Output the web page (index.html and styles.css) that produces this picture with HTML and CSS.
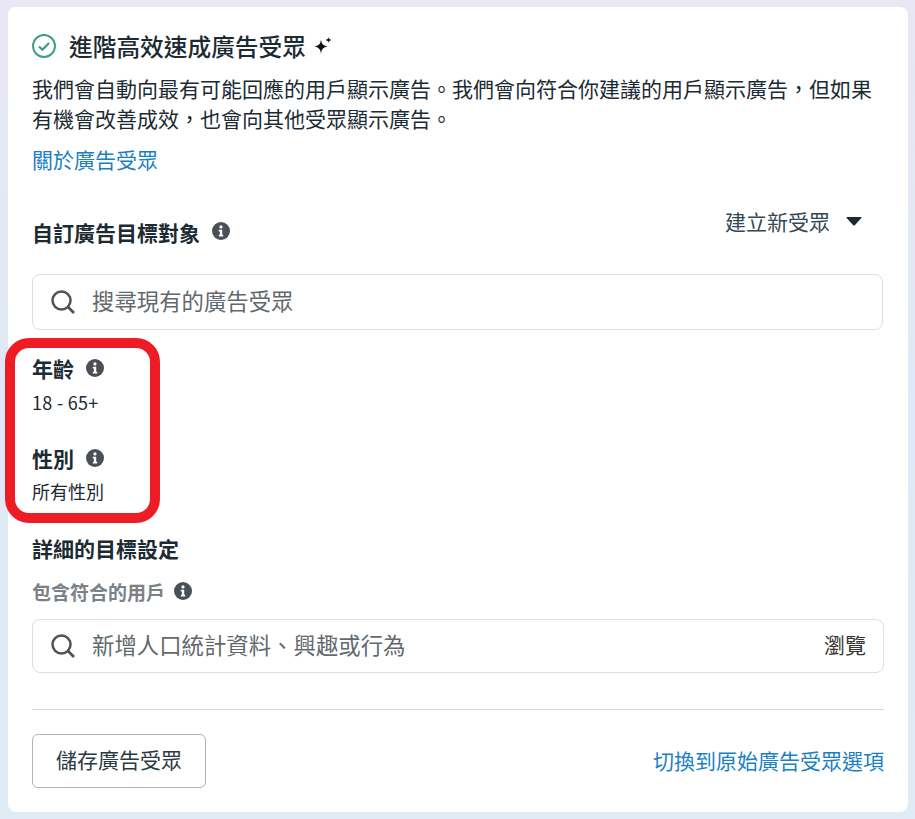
FILE: index.html
```html
<!DOCTYPE html>
<html lang="zh-Hant">
<head>
    <meta charset="UTF-8">
    <meta name="viewport" content="width=device-width, initial-scale=1.0">
    <title>廣告受眾</title>
    <link rel="stylesheet" href="styles.css">
</head>
<body>
    <div class="card">
        <div class="title-row">
            <svg class="check-icon" viewBox="0 0 24 24" width="24" height="24" aria-hidden="true">
                <circle cx="12" cy="12" r="11" fill="none" stroke="#3a9f7f" stroke-width="1.9"/>
                <path d="M7 12.500l3.400 3.300L17 9" fill="none" stroke="#3a9f7f" stroke-width="2.200"/>
            </svg>
            <h1 class="title">進階高效速成廣告受眾</h1>
            <svg class="spark-icon" viewBox="0 0 18 18" width="18" height="18" aria-hidden="true">
                <path d="M7 2.500C7.600 7 9 8.700 14 9.500 9 10.300 7.600 12 7 17 6.400 12 5 10.300 0 9.500 5 8.700 6.400 7 7 2.500z" fill="#111"/>
                <path d="M14.500 0c.3 1.800 1 2.500 3 3-2 .4-2.700 1.200-3 3-.3-1.800-1-2.600-3-3 2-.5 2.700-1.200 3-3z" fill="#111"/>
            </svg>
        </div>
        <p class="intro">我們會自動向最有可能回應的用戶顯示廣告。我們會向符合你建議的用戶顯示廣告，但如果有機會改善成效，也會向其他受眾顯示廣告。</p>
        <a class="link about-link" href="#">關於廣告受眾</a>

        <div class="custom-head">
            <div class="label custom-label">自訂廣告目標對象
                <svg class="info-icon" viewBox="0 0 18 18" aria-hidden="true"><use href="#info"/></svg>
            </div>
            <div class="create-new">建立新受眾
                <svg class="caret" viewBox="0 0 16 10" width="16" height="10" aria-hidden="true"><path d="M1 1h14a.6.6 0 0 1 .4 1L9 9a1.400 1.400 0 0 1-2 0L.6 2A.6.6 0 0 1 1 1z" fill="#1c2b33"/></svg>
            </div>
        </div>

        <div class="search-box search-audience">
            <svg class="search-icon" viewBox="0 0 24 24" width="24" height="24" aria-hidden="true"><use href="#search"/></svg>
            <span class="placeholder">搜尋現有的廣告受眾</span>
        </div>

        <div class="demographics">
            <div class="label">年齡
                <svg class="info-icon" viewBox="0 0 18 18" aria-hidden="true"><use href="#info"/></svg>
            </div>
            <div class="value age-value">18 - 65+</div>
            <div class="label gender-label">性別
                <svg class="info-icon" viewBox="0 0 18 18" aria-hidden="true"><use href="#info"/></svg>
            </div>
            <div class="value gender-value">所有性別</div>
            <div class="highlight"></div>
        </div>

        <div class="label detail-label">詳細的目標設定</div>
        <div class="include-label">包含符合的用戶
            <svg class="info-icon" viewBox="0 0 18 18" aria-hidden="true"><use href="#info"/></svg>
        </div>
        <div class="search-box search-detail">
            <svg class="search-icon" viewBox="0 0 24 24" width="24" height="24" aria-hidden="true"><use href="#search"/></svg>
            <span class="placeholder">新增人口統計資料、興趣或行為</span>
            <span class="browse">瀏覽</span>
        </div>

        <div class="footer">
            <button class="save-button">儲存廣告受眾</button>
            <a class="link switch-link" href="#">切換到原始廣告受眾選項</a>
        </div>
    </div>

    <!-- shared icons -->
    <svg class="icon-defs" aria-hidden="true">
        <symbol id="info" viewBox="0 0 18 18">
            <circle cx="9" cy="9" r="9" fill="#4b4f56"/>
            <circle cx="9" cy="4.900" r="1.600" fill="#fff"/>
            <path d="M6.800 7.700h3.400v5h1v1.700H6.900v-1.700h1v-3.300H6.800z" fill="#fff"/>
        </symbol>
        <symbol id="search" viewBox="0 0 24 24">
            <circle cx="10.500" cy="10.500" r="9" fill="none" stroke="#4f5459" stroke-width="2.500"/>
            <path d="M16.800 16.800L23 23" fill="none" stroke="#4f5459" stroke-width="2.800"/>
        </symbol>
    </svg>
</body>
</html>
```

FILE: styles.css
```css
body {
    margin: 0;
    height: 819px;
    padding: 7px 7px 7px 8px;
    box-sizing: border-box;
    overflow: hidden;
    background: linear-gradient(180deg, #e9e7f3 0%, #dfe9f7 50%, #dfebf6 100%);
    font-family: "Noto Sans CJK TC", "Noto Sans", sans-serif;
    color: #1c2b33;
}
.card {
    height: 805px;
    box-sizing: border-box;
    padding: 24px 24px 0;
    background-color: #fff;
    border-radius: 8px;
}
.title-row {
    display: flex;
    align-items: center;
    height: 30px;
}
.check-icon {
    margin-right: 13px;
}
.title {
    margin: 0;
    font-size: 23.700px;
    line-height: 30px;
    font-weight: 500;
}
.spark-icon {
    margin-left: 8px;
}
.intro {
    margin: 12px 0 0;
    font-size: 21px;
    line-height: 30px;
    color: #1c2b33;
}
.link {
    color: #1a7fc4;
    font-size: 21px;
    line-height: 30px;
    text-decoration: none;
}
.about-link {
    display: block;
    margin-top: 11px;
}
.switch-link {
    margin-bottom: 2px;
}
.custom-head {
    display: flex;
    justify-content: space-between;
    margin-top: 26px;
    height: 74px;
}
.label {
    font-size: 21px;
    line-height: 30px;
    font-weight: 700;
    display: flex;
    align-items: center;
}
.custom-label {
    margin-top: 17px;
    height: 30px;
}
.info-icon {
    width: 18px;
    height: 18px;
    margin-left: 12px;
    margin-bottom: 3px;
}
.demographics .info-icon {
    margin-bottom: 1px;
}
.create-new {
    display: flex;
    align-items: center;
    height: 30px;
    margin-top: 6px;
    margin-right: 22px;
    font-size: 21px;
    color: #344854;
}
.caret {
    margin-left: 16px;
}
.search-box {
    display: flex;
    align-items: center;
    box-sizing: border-box;
    border: 1px solid #dcdee3;
    border-radius: 8px;
    padding-left: 18px;
}
.search-audience {
    height: 56px;
    margin-right: 1px;
}
.search-detail {
    height: 54px;
    margin-top: 13px;
    padding-right: 17px;
}
.search-icon {
    margin-right: 17px;
}
.placeholder {
    margin-bottom: 4px;
    font-size: 22.400px;
    color: #62696e;
}
.browse {
    margin-left: auto;
    margin-bottom: 4px;
    font-size: 21px;
    color: #333;
}
.demographics {
    position: relative;
    margin-top: 23px;
    height: 169px;
}
.value {
    font-size: 18px;
    line-height: 26px;
}
.age-value {
    margin-top: 6px;
    letter-spacing: 0.3px;
}
.gender-value {
    margin-top: 5px;
}
.gender-label {
    margin-top: 28px;
}
.highlight {
    position: absolute;
    left: -27px;
    top: -15px;
    width: 155px;
    height: 185px;
    box-sizing: border-box;
    border: 10px solid #ee1c25;
    border-radius: 24px;
}
.detail-label {
    margin-top: 11px;
}
.include-label {
    display: flex;
    align-items: center;
    margin-top: 13px;
    height: 30px;
    font-size: 19px;
    font-weight: 700;
    color: #7b8287;
}
.include-label .info-icon {
    margin-left: 9px;
    margin-bottom: 1px;
}
.footer {
    display: flex;
    justify-content: space-between;
    align-items: center;
    margin-top: 36px;
    padding-top: 24px;
    border-top: 1px solid #d3d5da;
}
.save-button {
    width: 174px;
    height: 54px;
    padding: 0 0 4px;
    background-color: #fff;
    border: 1px solid #a9b6c2;
    border-radius: 6px;
    font-family: inherit;
    font-size: 21px;
    color: #2a3a44;
}
.icon-defs {
    display: none;
}
```
